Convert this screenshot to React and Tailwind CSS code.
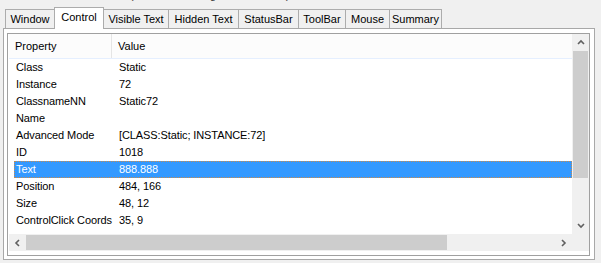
import React from 'react';

const tabs = [
  { label: 'Window', w: 'w-[50px]' },
  { label: 'Control', w: 'w-[50px]', active: true },
  { label: 'Visible Text', w: 'w-[66px]' },
  { label: 'Hidden Text', w: 'w-[71px]' },
  { label: 'StatusBar', w: 'w-[61px]' },
  { label: 'ToolBar', w: 'w-[48px]' },
  { label: 'Mouse', w: 'w-[45px]' },
  { label: 'Summary', w: 'w-[53px]' },
];

const rows = [
  ['Class', 'Static'],
  ['Instance', '72'],
  ['ClassnameNN', 'Static72'],
  ['Name', ''],
  ['Advanced Mode', '[CLASS:Static; INSTANCE:72]'],
  ['ID', '1018'],
  ['Text', '888.888', true],
  ['Position', '484, 166'],
  ['Size', '48, 12'],
  ['ControlClick Coords', '35, 9'],
];

function Chevron({ dir }) {
  const pts = {
    up: '1,5 4,2 7,5',
    down: '1,2 4,5 7,2',
    left: '5,1 2,4 5,7',
    right: '2,1 5,4 2,7',
  }[dir];
  return (
    <svg width="8" height="8" viewBox="0 0 8 8">
      <polyline points={pts} fill="none" stroke="#606060" strokeWidth="1.6" />
    </svg>
  );
}

export default function App() {
  return (
    <div
      className="w-[601px] h-[263px] bg-[#f0f0f0] text-[11px] text-black overflow-hidden"
      style={{ fontFamily: '"Liberation Sans", Arial, sans-serif' }}
    >
      {/* clipped line above the tabs, only the descenders show */}
      <div className="h-[7px] overflow-hidden pl-[130px]">
        <div className="-mt-[11px] leading-[13px] text-[#333]">
          (Finder Tool: drag over a control)
        </div>
      </div>

      {/* tab strip */}
      <div className="flex items-end h-[21px] pl-[5px]">
        {tabs.map((t, i) => (
          <div
            key={t.label}
            className={
              t.active
                ? `${t.w} h-[22px] -mb-px relative z-10 bg-white border border-b-0 border-[#acacac] flex items-center justify-center pb-[2px] ${i ? '-ml-px' : ''}`
                : `${t.w} h-[19px] bg-[#f0f0f0] border border-b-0 border-[#acacac] flex items-center justify-center ${i ? '-ml-px' : ''}`
            }
          >
            {t.label}
          </div>
        ))}
      </div>

      {/* tab page */}
      <div className="ml-[3px] w-[592px] h-[232px] bg-white border border-[#a8a8a8] pt-[4px] pl-[3px]">
        <div className="w-[583px] h-[223px] border border-[#a0a0a0] pl-px pb-[4px] flex flex-col">
          <div className="flex flex-1 min-h-0">
            {/* list area */}
            <div className="w-[563px] flex flex-col">
              <div className="flex h-[25px] border-b border-[#e5efff] items-center bg-[#fcfcfc]">
                <div className="w-[103px] h-full pl-[6px] flex items-center border-r border-[#e5e5e5]">
                  Property
                </div>
                <div className="pl-[6px]">Value</div>
              </div>
              <div className="pl-[5px] tracking-[-0.1px]">
                {rows.map(([k, v, sel]) => (
                  <div
                    key={k}
                    className={
                      sel
                        ? 'flex h-[17px] items-center bg-[#3399ff] text-white border border-dotted border-[#c98a4c]'
                        : 'flex h-[17px] items-center'
                    }
                  >
                    <div className={sel ? 'w-[98px] pl-px whitespace-nowrap' : 'w-[98px] pl-[2px] whitespace-nowrap'}>{k}</div>
                    <div className={sel ? 'pl-[6px]' : 'pl-[7px]'}>{v}</div>
                  </div>
                ))}
              </div>
            </div>
            {/* vertical scrollbar */}
            <div className="w-[17px] bg-[#f0f0f0] flex flex-col">
              <div className="h-[17px] flex items-center justify-center">
                <Chevron dir="up" />
              </div>
              <div className="h-[127px] mx-px bg-[#cdcdcd]" />
              <div className="flex-1" />
              <div className="h-[17px] flex items-center justify-center">
                <Chevron dir="down" />
              </div>
            </div>
          </div>
          {/* horizontal scrollbar */}
          <div className="flex h-[17px]">
            <div className="w-[563px] bg-[#f0f0f0] flex items-center">
              <div className="w-[17px] h-full flex items-center justify-center">
                <Chevron dir="left" />
              </div>
              <div className="w-[421px] h-[15px] bg-[#cdcdcd]" />
              <div className="flex-1" />
              <div className="w-[17px] h-full flex items-center justify-center">
                <Chevron dir="right" />
              </div>
            </div>
            <div className="w-[17px] bg-[#f0f0f0]" />
          </div>
        </div>
      </div>
    </div>
  );
}
